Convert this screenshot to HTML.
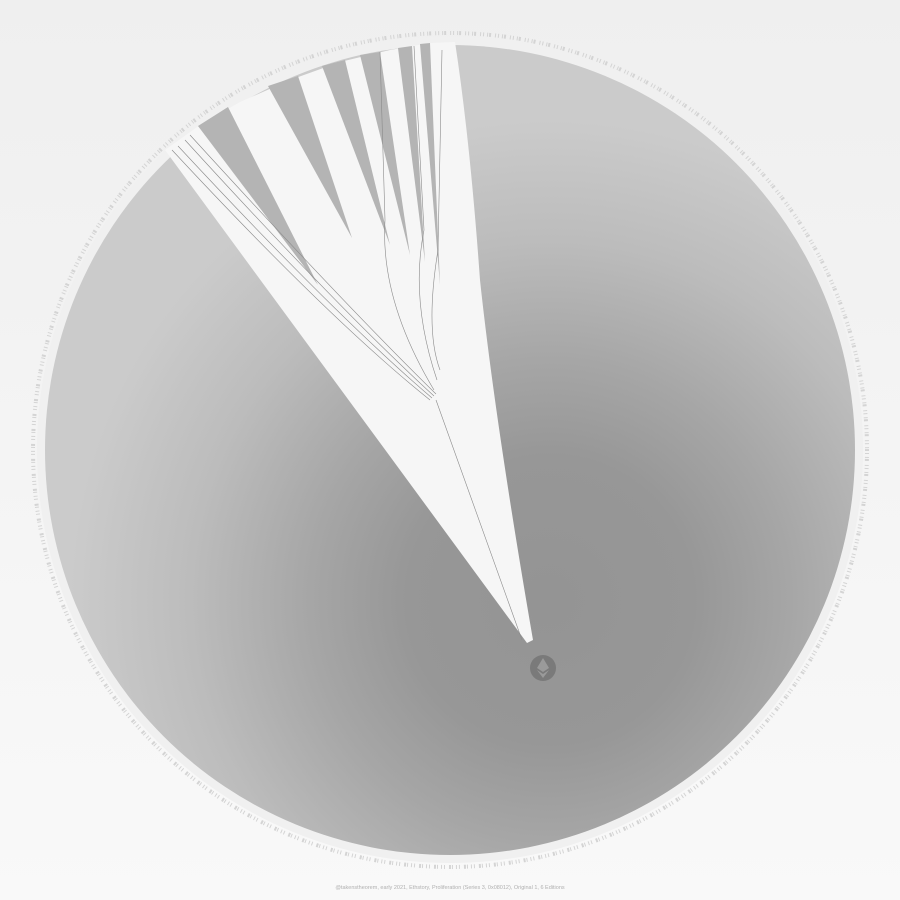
<!DOCTYPE html>
<html><head><style>html,body{margin:0;padding:0;width:900px;height:900px;overflow:hidden;background:#f4f4f4}
svg{display:block}</style></head><body>
<svg width="900" height="900" viewBox="0 0 900 900" xmlns="http://www.w3.org/2000/svg">
<defs>
<linearGradient id="bg" x1="0" y1="0" x2="0" y2="1"><stop offset="0" stop-color="#efefef"/><stop offset="1" stop-color="#f9f9f9"/></linearGradient>
<radialGradient id="disc" cx="550" cy="600" r="480" gradientUnits="userSpaceOnUse">
<stop offset="0" stop-color="#949494"/><stop offset="0.3" stop-color="#979797"/><stop offset="0.5" stop-color="#a6a6a6"/><stop offset="0.75" stop-color="#bcbcbc"/><stop offset="1" stop-color="#cbcbcb"/></radialGradient>
</defs>
<rect width="900" height="900" fill="url(#bg)"/>
<circle cx="450" cy="450" r="417" fill="none" stroke="#d4d4d4" stroke-width="4" stroke-dasharray="1 2 1 3 1 1 2 4"/>
<circle cx="450" cy="450" r="413" fill="#f0f0f0"/>
<circle cx="450" cy="450" r="405" fill="url(#disc)"/>
<path d="M165,150 L200,125 L240,102 L290,80 L340,62 L390,50 L430,43 L455,42 Q470,140 480,280 Q495,420 533,640 L527,643 Z" fill="#f6f6f6"/>
<g fill="#b4b4b4">
<path d="M198,126 L228,107 L318,285 Z"/>
<path d="M268,86 L298,76 L352,238 Z"/>
<path d="M322,66 L345,60 L390,245 Z"/>
<path d="M360,55 L380,52 L410,255 Z"/>
<path d="M398,48 L412,46 L425,262 Z"/>
<path d="M420,44 L430,43 L440,285 Z"/>
</g>
<g stroke="#8a8a8a" stroke-width="0.6" fill="none">
<path d="M172,150 Q330,320 430,400"/>
<path d="M178,146 Q335,315 432,398"/>
<path d="M185,140 Q340,310 434,396"/>
<path d="M190,135 Q345,305 436,394"/>
<path d="M440,370 Q425,330 438,250 L442,50"/>
<path d="M437,380 Q410,300 424,230 L414,46"/>
<path d="M434,390 Q380,300 385,220 L380,52"/>
<path d="M436,400 L522,640"/>
</g>
<circle cx="543" cy="668" r="13" fill="#7a7a7a"/>
<path d="M543,658 L549,668 L543,672 L537,668 Z M537,670 L543,674 L549,670 L543,678 Z" fill="#9a9a9a"/>
<text x="450" y="889" text-anchor="middle" font-family="Liberation Sans, sans-serif" font-size="5.5" fill="#b0b0b0">@takensthеorem, early 2021, Ethstory, Proliferation (Series 3, 0x08012), Original 1, 6 Editions</text>
</svg>
</body></html>
